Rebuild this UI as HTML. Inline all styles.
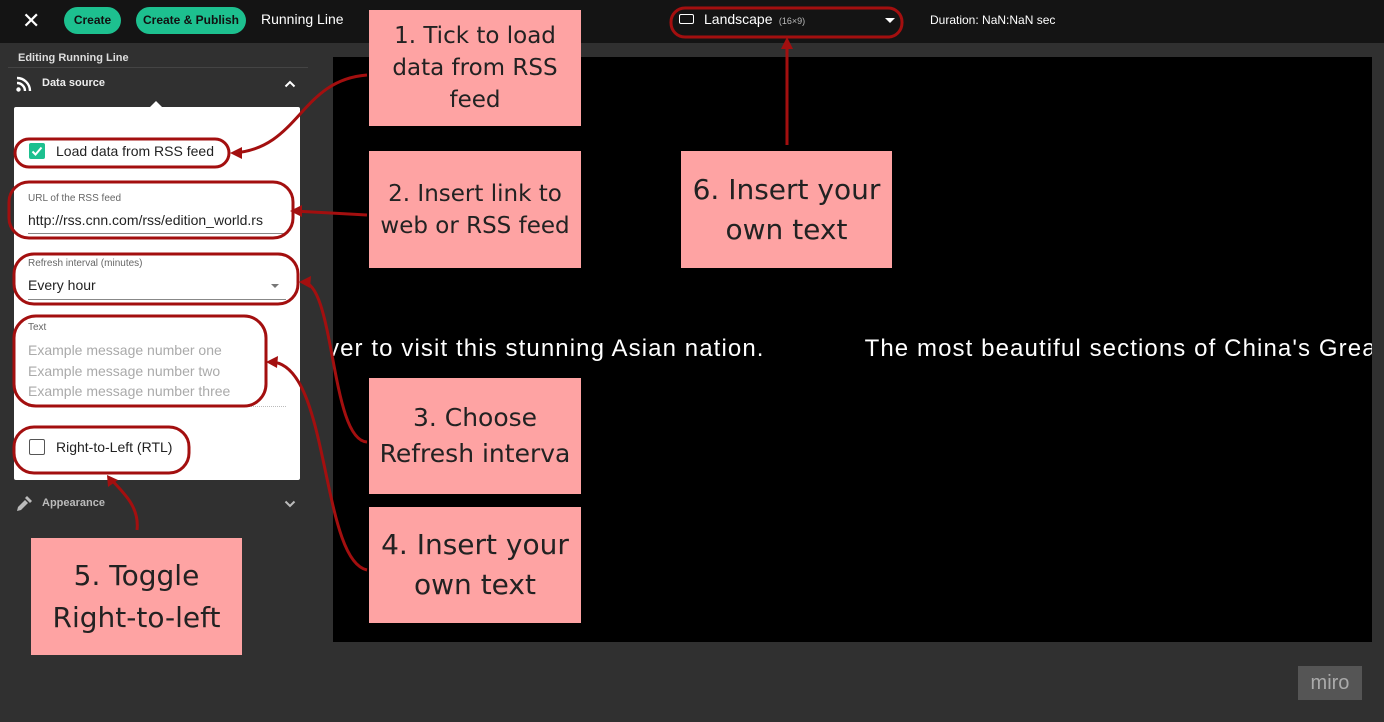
<!DOCTYPE html>
<html><head><style>
body{margin:0;width:1384px;height:722px;background:#303030;font-family:"Liberation Sans",sans-serif;position:relative;overflow:hidden}
.a{position:absolute}
.top{left:0;top:0;width:1384px;height:43px;background:#141414}
.btn{background:#1dc08f;color:#111;font-weight:bold;font-size:12px;border-radius:14px;height:27px;line-height:27px;text-align:center;top:7px}
.note{background:#fea3a3;color:#222;text-align:center;display:flex;align-items:center;justify-content:center;line-height:32px;font-family:"DejaVu Sans","Liberation Sans",sans-serif;font-size:23px}
.lbl{font-size:10px;color:#666}
.ph{color:#aaa;font-size:14px;line-height:20.5px}
</style></head><body>
<div class="a top"></div>
<div class="a" style="left:22px;top:8px;color:#fff;font-size:22px">✕</div>
<div class="a btn" style="left:64px;width:57px">Create</div>
<div class="a btn" style="left:136px;width:110px">Create &amp; Publish</div>
<div class="a" style="left:261px;top:11px;color:#fff;font-size:14px">Running Line</div>
<div class="a" style="left:679px;top:14px;width:13px;height:8px;border:1.5px solid #fff;border-radius:2px"></div>
<div class="a" style="left:704px;top:11px;color:#fff;font-size:14px">Landscape <span style="font-size:9px;color:#bbb">&nbsp;(16×9)</span></div>
<div class="a" style="left:885px;top:18px;border:5px solid transparent;border-top-color:#fff;border-bottom:0"></div>
<div class="a" style="left:930px;top:13px;color:#fff;font-size:12px">Duration: NaN:NaN sec</div>

<div class="a" style="left:18px;top:52px;color:#ddd;font-size:11px;font-weight:bold">Editing Running Line</div>
<div class="a" style="left:8px;top:67px;width:300px;height:1px;background:#444"></div>
<svg class="a" style="left:16px;top:76px" width="16" height="16" viewBox="0 0 16 16"><circle cx="2.5" cy="13.5" r="2.2" fill="#fff"/><path d="M1 7a8 8 0 0 1 8 8M1 2a13 13 0 0 1 13 13" stroke="#fff" stroke-width="2.4" fill="none"/></svg>
<div class="a" style="left:42px;top:77px;color:#eee;font-size:11px;font-weight:bold">Data source</div>
<svg class="a" style="left:284px;top:80px" width="12" height="8"><path d="M1.5 6.5 6 2l4.5 4.5" stroke="#fff" stroke-width="2" fill="none"/></svg>
<div class="a" style="left:14px;top:107px;width:286px;height:373px;background:#fff;border-radius:2px"></div>
<div class="a" style="left:150px;top:101px;border:6px solid transparent;border-bottom-color:#fff;border-top:0"></div>
<div class="a" style="left:29px;top:143px;width:16px;height:16px;background:#1dc08f;border-radius:2px"><svg width="16" height="16"><path d="M3.5 8.5 6.5 11.5 12.5 4.5" stroke="#fff" stroke-width="2" fill="none"/></svg></div>
<div class="a" style="left:56px;top:143px;font-size:14px;color:#222">Load data from RSS feed</div>
<div class="a lbl" style="left:28px;top:193px">URL of the RSS feed</div>
<div class="a" style="left:28px;top:212px;font-size:14px;color:#222">http://rss.cnn.com/rss/edition_world.rs</div>
<div class="a" style="left:28px;top:233px;width:258px;height:1px;background:#888"></div>
<div class="a lbl" style="left:28px;top:258px">Refresh interval (minutes)</div>
<div class="a" style="left:28px;top:277px;font-size:14px;color:#222">Every hour</div>
<div class="a" style="left:271px;top:284px;border:4px solid transparent;border-top-color:#777;border-bottom:0"></div>
<div class="a" style="left:28px;top:299px;width:258px;height:1px;background:#888"></div>
<div class="a lbl" style="left:28px;top:322px">Text</div>
<div class="a ph" style="left:28px;top:340px">Example message number one<br>Example message number two<br>Example message number three</div>
<div class="a" style="left:28px;top:406px;width:258px;border-top:1px dotted #bbb"></div>
<div class="a" style="left:29px;top:439px;width:14px;height:14px;border:1.5px solid #555;border-radius:2px"></div>
<div class="a" style="left:56px;top:439px;font-size:14px;color:#222">Right-to-Left (RTL)</div>
<svg class="a" style="left:15px;top:495px" width="18" height="18" viewBox="0 0 18 18"><path d="M2 16l1-4 7-7 3 3-7 7z" fill="#bbb"/><path d="M10 3l2-2 5 5-2 2z" fill="#bbb"/></svg>
<div class="a" style="left:42px;top:497px;color:#bbb;font-size:11px;font-weight:bold">Appearance</div>
<svg class="a" style="left:284px;top:500px" width="12" height="8"><path d="M1.5 1.5 6 6l4.5-4.5" stroke="#bbb" stroke-width="2" fill="none"/></svg>

<div class="a" style="left:333px;top:57px;width:1039px;height:585px;background:#000;overflow:hidden">
<div class="a" style="left:-6px;top:278px;color:#fff;font-size:24px;letter-spacing:1.1px;white-space:nowrap">ver to visit this stunning Asian nation.<span style="display:inline-block;width:100px"></span>The most beautiful sections of China's Great Wall</div>
</div>
<div class="a" style="left:1298px;top:666px;width:64px;height:34px;background:#555;color:#aaa;font-size:20px;text-align:center;line-height:34px">miro</div>

<div class="a note" style="left:369px;top:10px;width:212px;height:116px">1. Tick to load<br>data from RSS<br>feed</div>
<div class="a note" style="left:369px;top:151px;width:212px;height:117px">2. Insert link to<br>web or RSS feed</div>
<div class="a note" style="left:681px;top:151px;width:211px;height:117px;font-size:28px;line-height:40px">6. Insert your<br>own text</div>
<div class="a note" style="left:369px;top:378px;width:212px;height:116px;line-height:36px;font-size:25px">3. Choose<br>Refresh interva</div>
<div class="a note" style="left:369px;top:507px;width:212px;height:116px;font-size:28px;line-height:40px">4. Insert your<br>own text</div>
<div class="a note" style="left:31px;top:538px;width:211px;height:117px;font-size:28px;line-height:42px">5. Toggle<br>Right-to-left</div>

<svg class="a" style="left:0;top:0" width="1384" height="722" fill="none" stroke="#a30f0f" stroke-width="3">
<rect x="15" y="139" width="214" height="28" rx="14"/>
<rect x="9" y="182" width="284" height="56" rx="20"/>
<rect x="14" y="254" width="284" height="50" rx="20"/>
<rect x="14" y="316" width="252" height="90" rx="22"/>
<rect x="14" y="427" width="175" height="46" rx="20"/>
<rect x="671" y="8" width="231" height="29" rx="14"/>
<path d="M367 75 C300 80 300 148 234 153"/>
<path d="M367 215 L294 211"/>
<path d="M367 442 C330 440 335 280 302 282"/>
<path d="M367 570 C320 560 330 360 270 362"/>
<path d="M137 530 C140 505 120 490 110 478"/>
<path d="M787 145 L787 42"/>
</svg>
<svg class="a" style="left:0;top:0" width="1384" height="722" fill="#a30f0f">
<polygon points="230,153 242,147 242,159"/>
<polygon points="290,211 302,205 302,217"/>
<polygon points="299,282 311,276 310,288"/>
<polygon points="266,362 278,356 277,368"/>
<polygon points="107,475 118,480 108,487"/>
<polygon points="787,37 781,49 793,49"/>
</svg>
</body></html>
